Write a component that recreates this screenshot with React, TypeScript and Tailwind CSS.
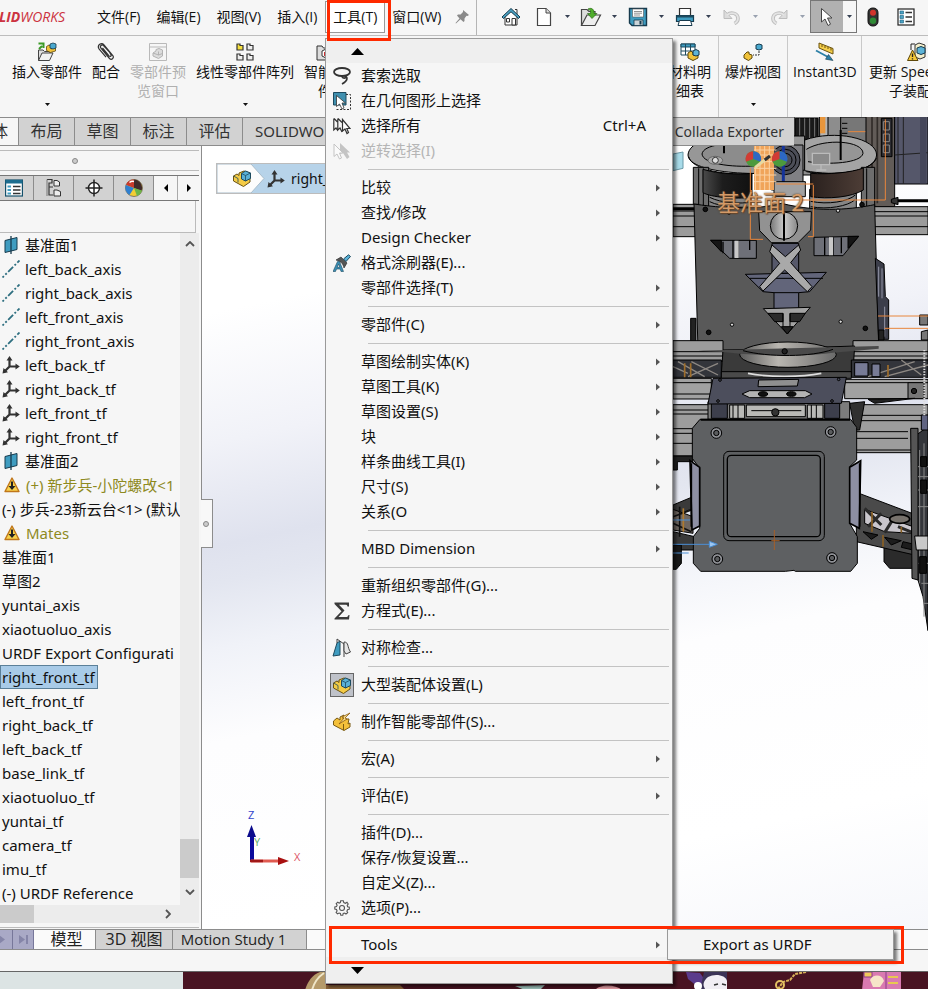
import React from "react";

type IconProps = { className?: string };

/* ---------- icons ---------- */

const Caret = ({ className = "" }: IconProps) => (
  <svg className={className} width="5" height="3" viewBox="0 0 5 3" aria-hidden="true">
    <path d="M0 0H5L2.5 3Z" fill="currentColor" />
  </svg>
);

const SubArrow = () => (
  <svg width="4" height="8" viewBox="0 0 4 8" aria-hidden="true">
    <path d="M0 0.5L4 4L0 7.5Z" fill="#555" />
  </svg>
);

const PinIcon = () => (
  <svg width="16" height="16" viewBox="0 0 16 16" aria-hidden="true">
    <path d="M9 1L15 6L13.500 7L12.500 6.800L10.500 9.500L10.500 12L9.500 13L6.500 10.200L2 14.500L1.500 14L5.500 9.500L3 6.500L4 5.500L6.500 5.500L9 3Z" fill="#8a8a8a" />
  </svg>
);

const HomeIcon = () => (
  <svg width="20" height="20" viewBox="0 0 20 20" aria-hidden="true">
    <path d="M4 9V18H16V9L10 4Z" fill="#fff" stroke="#333" />
    <path d="M14 2.500H16V7" fill="none" stroke="#333" />
    <path d="M1 10L10 1.500L19 10L17.500 11.500L10 4.800L2.500 11.500Z" fill="#4aa3c4" stroke="#173a4d" />
    <path d="M5.500 11.500H8.500V15H5.500ZM11 11.500H14.500V18H11Z" fill="#fff" stroke="#333" />
  </svg>
);

const NewDocIcon = () => (
  <svg width="16" height="20" viewBox="0 0 16 20" aria-hidden="true">
    <path d="M1.500 1.500H10L14.500 6V18.500H1.500Z" fill="#fff" stroke="#444" strokeWidth="1.200" />
    <path d="M10 1.500V6H14.500" fill="#ddd" stroke="#444" />
  </svg>
);

const OpenIcon = () => (
  <svg width="22" height="20" viewBox="0 0 22 20" aria-hidden="true">
    <path d="M1.500 18.500V2.500H7L9 4.500H15V8" fill="#ddd" stroke="#444" strokeWidth="1.200" />
    <path d="M1.500 18.500L7 8H20.500L15 18.500Z" fill="#eee" stroke="#444" strokeWidth="1.200" />
    <path d="M8 2C12 0 14.500 3 14 6.500H17L12 11.500L7.500 6.500H10.500C11 4 10 3 8 2Z" fill="#4fae2c" stroke="#2d6b18" strokeWidth="0.700" />
  </svg>
);

const SaveIcon = () => (
  <svg width="20" height="20" viewBox="0 0 20 20" aria-hidden="true">
    <path d="M1.500 1.500H18.500V18.500H4L1.500 16Z" fill="#3f9cc0" stroke="#173a4d" strokeWidth="1.400" />
    <path d="M4.500 2H15.500V10H4.500Z" fill="#fff" stroke="#555" strokeWidth="0.600" />
    <path d="M6 4.500H14M6 6.200H14M6 8H12" stroke="#777" strokeWidth="0.800" />
    <path d="M6 13H15V18.500H6Z" fill="#ccd4d8" stroke="#173a4d" strokeWidth="0.800" />
    <path d="M11.500 14H13.500V17.500H11.500Z" fill="#173a4d" />
  </svg>
);

const PrintIcon = () => (
  <svg width="20" height="20" viewBox="0 0 20 20" aria-hidden="true">
    <path d="M4.500 8V1.500H15.500V8" fill="#fff" stroke="#333" strokeWidth="1.200" />
    <path d="M1.500 8.500H18.500V14.500H1.500Z" fill="#3f9cc0" stroke="#173a4d" strokeWidth="1.200" />
    <path d="M1.500 8.500H18.500V10.500H1.500Z" fill="#1d4a5f" />
    <path d="M4.500 13.500H15.500L17 18.500H3Z" fill="#fff" stroke="#173a4d" />
  </svg>
);

const UndoIcon = ({ className = "" }: IconProps) => (
  <svg className={className} width="18" height="16" viewBox="0 0 18 16" aria-hidden="true">
    <path d="M4 6C8 2.500 15 4 15 9.500C15 12 13.500 13.500 11.500 14.500" fill="none" stroke="#bdbdbd" strokeWidth="3.600" />
    <path d="M1 1V9.500H9Z" fill="#dcdcdc" stroke="#bdbdbd" />
    <path d="M4 6C8 2.500 15 4 15 9.500C15 12 13.500 13.500 11.500 14.500" fill="none" stroke="#e4e4e4" strokeWidth="1.800" />
  </svg>
);

const PointerIcon = () => (
  <svg width="14" height="20" viewBox="0 0 14 20" aria-hidden="true">
    <path d="M1.500 1.500V15L5 12L8 18.500L10.500 17.200L7.500 11H12Z" fill="#fff" stroke="#444" />
  </svg>
);

const TrafficIcon = () => (
  <svg width="12" height="20" viewBox="0 0 12 20" aria-hidden="true">
    <rect x="1" y="1" width="10" height="18" rx="4.500" fill="#333" stroke="#111" />
    <circle cx="6" cy="5.800" r="3" fill="#d2352c" />
    <circle cx="6" cy="13.800" r="3.200" fill="#2f8a35" />
  </svg>
);

const ListIcon = ({ className = "" }: IconProps) => (
  <svg className={className} width="18" height="18" viewBox="0 0 18 18" aria-hidden="true">
    <rect x="1" y="1" width="16" height="16" fill="#fff" stroke="#222" strokeWidth="1.200" />
    <path d="M3 3H6.500V6H3ZM3 7.500H6.500V10.500H3ZM3 12H6.500V15H3Z" fill="#4aa3c4" stroke="#1b5f80" strokeWidth="0.600" />
    <path d="M8.500 4.500H15M8.500 9H15M8.500 13.500H15" stroke="#333" strokeWidth="1.300" />
  </svg>
);

const FeatureTreeIcon = () => (
  <svg width="18" height="18" viewBox="0 0 18 18" aria-hidden="true">
    <rect x="0.600" y="1" width="16.800" height="16" fill="#fff" stroke="#14506b" strokeWidth="1.200" />
    <path d="M0.600 1H17.400V4.500H0.600Z" fill="#1d6d8f" />
    <path d="M2.500 6.500H6V8.500H2.500ZM2.500 10H6V12H2.500ZM2.500 13.500H6V15.500H2.500Z" fill="#3f9cc0" />
    <path d="M8 7.500H15.500M8 11H15.500M8 14.500H15.500" stroke="#333" strokeWidth="1.300" />
  </svg>
);

const InsertPartIcon = () => (
  <svg width="20" height="20" viewBox="0 0 20 20" aria-hidden="true">
    <path d="M1.500 18.500V8H6L7.500 9.500H13V11" fill="#ddd" stroke="#444" />
    <path d="M1.500 18.500L5 11H16L12.500 18.500Z" fill="#f1f1f1" stroke="#444" />
    <path d="M2 7L5 4M1.500 1.500H6.500V6" stroke="#3a9a26" strokeWidth="2" fill="none" />
    <path d="M9.500 4.500L12 3L14 4.500V7L18.500 5V9L13.500 10.500L9.500 8.500Z" fill="#f0c23a" stroke="#5e480a" strokeWidth="0.800" />
    <path d="M13 2L16 1L19 2V6L16 7L13 6Z" fill="#4aa9cf" stroke="#173a4d" strokeWidth="0.800" />
  </svg>
);

const ClipIcon = () => (
  <svg width="18" height="20" viewBox="0 0 18 20" aria-hidden="true">
    <path d="M12.500 10L6.500 3.500C4.800 2 2.500 4 3.800 6L12.500 16.500C14.500 18.500 17.500 16 15.800 13.500L7 2.800C4.500 0 -0.300 3 2 6.800L9 15.200M5.500 6L12 13.800C13.200 15 14.800 14 13.800 12.500L12.500 10" fill="none" stroke="#333" strokeWidth="1.200" />
  </svg>
);

const PreviewIcon = () => (
  <svg width="18" height="18" viewBox="0 0 18 18" aria-hidden="true">
    <path d="M0.500 0.500H17.500V17.500H0.500ZM0.500 4H17.500" fill="none" stroke="#b9b9b9" />
    <path d="M4 10L7 8V6.500L10 5.500L13.500 7V13L9.500 15.500L4 13Z" fill="#dcdcdc" stroke="#b3b3b3" />
    <path d="M9.500 8.500V12L13.500 10.500M9.500 12L4 10" fill="none" stroke="#b3b3b3" />
  </svg>
);

const PatternIcon = () => (
  <svg width="18" height="18" viewBox="0 0 18 18" aria-hidden="true">
    <path d="M1 1H4V2.500H7V7H1Z" fill="#f5df3f" stroke="#333" strokeWidth="1.200" />
    <path d="M11 1H14V2.500H17V7H11ZM1 11H4V12.500H7V17H1ZM11 11H14V12.500H17V17H11Z" fill="#eee" stroke="#333" strokeWidth="1.200" />
  </svg>
);

const SmartIcon = () => (
  <svg width="18" height="18" viewBox="0 0 18 18" aria-hidden="true">
    <path d="M1 17V3H6L7.500 5H17V17Z" fill="#ddd" stroke="#333" />
    <path d="M6 8L10 6L14 8V13L10 15L6 13Z" fill="#fff" stroke="#333" />
    <path d="M8 9H12V13H8Z" fill="#c33" />
  </svg>
);

const BomIcon = () => (
  <svg width="20" height="18" viewBox="0 0 20 18" aria-hidden="true">
    <path d="M1 1H15V12H1Z" fill="#fff" stroke="#1d4a5f" />
    <path d="M1 1H15V4H1Z" fill="#3f9cc0" stroke="#1d4a5f" />
    <path d="M1 8H15M5.500 1V12M10.500 1V12" stroke="#1d4a5f" />
    <path d="M8 10L11 8L13 10V12L18 11V15L13 17.500L8 15Z" fill="#f0c23a" stroke="#5e480a" />
    <path d="M13 8L16 6.500L19 8V12L16 13L13 12Z" fill="#5db4d8" stroke="#173a4d" />
  </svg>
);

const ExplodeIcon = () => (
  <svg width="20" height="18" viewBox="0 0 20 18" aria-hidden="true">
    <path d="M1 12L4 9H6V11L9 12V15L5.500 17.500L1 15Z" fill="#f0c23a" stroke="#5e480a" />
    <path d="M13 2L16 1L19 2V6L16 7L13 6Z" fill="#4aa9cf" stroke="#173a4d" />
    <path d="M16 8V12H10" fill="none" stroke="#333" strokeDasharray="2 1" />
  </svg>
);

const InstantIcon = () => (
  <svg width="20" height="20" viewBox="0 0 20 20" aria-hidden="true">
    <path d="M4 1L18 6.500V12L4 6Z" fill="#f5cf4a" stroke="#6b5310" />
    <path d="M7 2.500V5M10 3.500V6M13 5V7M16 6V8.500" stroke="#6b5310" />
    <path d="M1 8.500L13 15" stroke="#2b7fa6" strokeWidth="1.800" />
    <path d="M18 18.500L10.500 17.200L13.500 12.500Z" fill="#2b7fa6" stroke="#173a4d" strokeWidth="0.600" />
  </svg>
);

const UpdateIcon = () => (
  <svg width="20" height="20" viewBox="0 0 20 20" aria-hidden="true">
    <path d="M4 8V2H8" fill="none" stroke="#222" />
    <path d="M8 3L12 1L18 3V15L13 17L8 15Z" fill="#f3eecb" stroke="#333" />
    <path d="M10 6L14 4.500L18 6V11L14 12.500L10 11Z" fill="#5db4d8" stroke="#173a4d" />
    <path d="M5.500 8L11 18.500H0.500Z" fill="#f6c937" stroke="#5e480a" />
    <path d="M5.500 11.500V15M5.500 16.200V17.500" stroke="#222" strokeWidth="1.400" />
  </svg>
);

const ConfigIcon = () => (
  <svg width="18" height="20" viewBox="0 0 18 20" aria-hidden="true">
    <path d="M2 1.500H7V5L4 5V17H8M4 9H8" fill="none" stroke="#333" strokeWidth="1.200" />
    <path d="M2 1.500V18" stroke="#777" />
    <path d="M9 2.500H12L14.500 4V8H9ZM9 12H12L15.500 13.500V18H9Z" fill="#eee" stroke="#333" />
  </svg>
);

const TargetIcon = () => (
  <svg width="18" height="18" viewBox="0 0 18 18" aria-hidden="true">
    <circle cx="9" cy="9" r="5.500" fill="#fff" stroke="#222" strokeWidth="1.400" />
    <path d="M9 0.500V17.500M0.500 9H17.500" stroke="#222" strokeWidth="1.500" />
  </svg>
);

const WheelIcon = () => (
  <svg width="18" height="18" viewBox="0 0 18 18" aria-hidden="true">
    <circle cx="9" cy="9" r="8.500" fill="#f2cd35" stroke="#444" strokeWidth="0.600" />
    <path d="M9 9L1 6A8.500 8.500 0 0 1 9 0.500Z" fill="#c93a2c" />
    <path d="M9 9V0.500A8.500 8.500 0 0 1 16.500 12Z" fill="#402a2a" />
    <path d="M9 9L4.500 16A8.500 8.500 0 0 1 0.800 6Z" fill="#2f7fd0" />
    <path d="M9 9L17 11.500A8.500 8.500 0 0 1 12 17Z" fill="#6bb54a" />
    <path d="M4.500 3.500A5 5 0 0 1 9 2.500" stroke="#fff" fill="none" strokeWidth="1.400" />
  </svg>
);

const PlaneIcon = () => (
  <svg width="14" height="18" viewBox="0 0 14 18" aria-hidden="true">
    <path d="M1 4.500L13 1.500V13.500L1 16.500Z" fill="#3f9cc0" stroke="#173a4d" />
    <path d="M7 0V18" stroke="#173a4d" strokeWidth="1.300" />
  </svg>
);

const AxisIcon = () => (
  <svg width="18" height="18" viewBox="0 0 18 18" aria-hidden="true">
    <path d="M0.500 17.500L17.500 0.500" stroke="#2e6f80" strokeWidth="1.800" strokeDasharray="7 2 2 2" strokeDashoffset="5" />
  </svg>
);

const FrameIcon = () => (
  <svg width="18" height="18" viewBox="0 0 18 18" aria-hidden="true">
    <path d="M7.500 2V10.500L2 16M7.500 10.500H16" fill="none" stroke="#333" strokeWidth="2.200" />
    <path d="M7.500 0L10.500 4.500H4.500ZM17.800 10.500L13.500 13.500V7.500ZM0.500 17.500L1.500 12L6 16.200Z" fill="#333" />
  </svg>
);

const WarnIcon = () => (
  <svg width="16" height="16" viewBox="0 0 16 16" aria-hidden="true">
    <path d="M8 1L15 14.500H1Z" fill="#f8d24c" stroke="#c0771b" strokeWidth="1.400" strokeLinejoin="round" />
    <path d="M8 4.500V10" stroke="#222" strokeWidth="2" />
    <path d="M4.500 9H11.500L8 13Z" fill="#222" />
  </svg>
);

const PartIcon = () => (
  <svg width="20" height="20" viewBox="0 0 20 20" aria-hidden="true">
    <path d="M1.500 8L5 6L7 7.500V5L12 3L18 5V14L11.500 18.500L1.500 13Z" fill="#f4cb45" stroke="#6b5310" strokeLinejoin="round" />
    <path d="M9.500 5.500L13.500 3L18.500 5V10.500L13.500 13L9.500 11Z" fill="#59b0d6" stroke="#1d4a5f" />
    <path d="M9.500 5.500L13.500 7.500L18.500 5M13.500 7.500V13M1.500 8L6 10.500V14.500" fill="none" stroke="#1d4a5f" strokeWidth="0.800" />
  </svg>
);

const LassoIcon = () => (
  <svg width="18" height="18" viewBox="0 0 18 18" aria-hidden="true">
    <ellipse cx="9" cy="5" rx="8" ry="4" fill="none" stroke="#333" strokeWidth="1.800" />
    <path d="M11 8.500C15.500 10 15 13.500 9 17M9.500 8.500C8 10.500 11 12 13 10.500" fill="none" stroke="#333" strokeWidth="1.600" />
  </svg>
);

const GeoSelectIcon = () => (
  <svg width="18" height="18" viewBox="0 0 18 18" aria-hidden="true">
    <path d="M0.500 0.500H13V13H0.500Z" fill="#3f8fae" stroke="#1d4a5f" />
    <path d="M13 2.500H17.500V17.500H3" fill="none" stroke="#333" strokeDasharray="2 1.500" />
    <path d="M3.500 3.500V14.500L6.500 12L9 17L11 16L9 11H12.500Z" fill="#fff" stroke="#333" strokeWidth="0.800" />
  </svg>
);

const MultiSelectIcon = () => (
  <svg width="18" height="18" viewBox="0 0 18 18" aria-hidden="true">
    <path d="M0.800 1.500V13L3 11L5 14M4.800 1.500V13L7 11L9 15M1 1.500L5 5.500M5 1.500L9 5.500" fill="none" stroke="#333" strokeWidth="1.200" />
    <path d="M9.500 2.500V14L12 12L14 16.500L15.500 15.500L13.800 11.500H17Z" fill="#fff" stroke="#333" strokeWidth="1.200" />
  </svg>
);

const InvertIcon = () => (
  <svg width="18" height="18" viewBox="0 0 18 18" aria-hidden="true">
    <path d="M7 1V12L10 11L14 17L16.500 15L14 10.500H17Z" fill="#c4c4c4" />
    <path d="M1 2V14.500L4 12L6.500 17L8.500 16L6.500 11H10Z" fill="#fafafa" stroke="#c4c4c4" />
  </svg>
);

const PainterIcon = () => (
  <svg width="18" height="18" viewBox="0 0 18 18" aria-hidden="true">
    <path d="M3 6L8 3L14 9L11 14C10 9 7 7 3 6Z" fill="#555" stroke="#222" strokeWidth="0.600" />
    <path d="M0 17.500L4.500 7.500H6.500L10.500 17.500H8L7.200 15H3.500L2.500 17.500ZM4.200 13.300H6.800L5.600 10Z" fill="#3b8fb5" stroke="#1d4a5f" strokeWidth="0.600" />
    <path d="M10.500 5L15.500 0.800L17.500 2.500L13 7.500Z" fill="#59b0d6" stroke="#1d4a5f" />
  </svg>
);

const SigmaIcon = () => (
  <svg width="16" height="18" viewBox="0 0 16 18" aria-hidden="true">
    <path d="M0.500 0.500H15V4.500H13.500C13.200 3 12.500 2.800 11.500 2.800H5L10.500 8.500L4.500 15H12C13.500 15 14 14.500 14.500 13H15.500L15 17.500H0.500V16.500L7.500 9.200L0.500 2Z" fill="#3a3a3a" />
  </svg>
);

const SymmetryIcon = () => (
  <svg width="20" height="20" viewBox="0 0 20 20" aria-hidden="true">
    <path d="M1 18L5 5L8 3V17Z" fill="#3f9cc0" stroke="#1d4a5f" />
    <path d="M5 1V5M5 1L12 6V19" fill="none" stroke="#444" />
    <path d="M12 4C17 4 15 9 18.500 14L14 16L12 13Z" fill="#e6e6e6" stroke="#444" />
  </svg>
);

const MakeSmartIcon = () => (
  <svg width="20" height="20" viewBox="0 0 20 20" aria-hidden="true">
    <path d="M1.500 9L5 6L8 8V5L12 3L11 7H17L16 12L18 11V15L12 18.500L1.500 13Z" fill="#f4c03a" stroke="#7a5b12" strokeLinejoin="round" />
    <path d="M18 1L10 5L12 6L7 12L15 7L13 6Z" fill="#fbe08a" stroke="#8a5b12" strokeWidth="0.800" />
    <path d="M11.500 12V18" stroke="#7a5b12" />
  </svg>
);

const GearIcon = () => (
  <svg width="16" height="16" viewBox="0 0 16 16" aria-hidden="true">
    <path d="M6.700 0.800H9.300L9.800 2.600L11.400 3.300L13 2.300L14.200 4L13.200 5.400L13.600 6.800L15.300 7.200V9.200L13.500 9.700L12.900 11.200L13.700 12.700L12 14L10.600 13L9.200 13.500L8.800 15.300H6.800L6.400 13.500L5 13L3.500 13.900L2.100 12.400L3.100 11L2.500 9.500L0.800 9V7L2.500 6.600L3.100 5.200L2.200 3.600L3.800 2.200L5.200 3.200L6.300 2.600Z" fill="none" stroke="#555" strokeWidth="1.100" />
    <circle cx="8" cy="8" r="2.500" fill="none" stroke="#555" strokeWidth="1.100" />
  </svg>
);

/* ---------- data ---------- */

type MenuEntry =
  | { kind: "item"; label: string; icon?: React.ReactNode; sub?: boolean; shortcut?: string; off?: boolean; on?: boolean }
  | { kind: "sep" };

const sep: MenuEntry = { kind: "sep" };
const item = (label: string, rest: object = {}): MenuEntry => ({ kind: "item", label, ...rest });

const menuEntries: MenuEntry[] = [
  item("套索选取", { icon: <LassoIcon /> }),
  item("在几何图形上选择", { icon: <GeoSelectIcon /> }),
  item("选择所有", { icon: <MultiSelectIcon />, shortcut: "Ctrl+A" }),
  item("逆转选择(I)", { icon: <InvertIcon />, off: true }),
  sep,
  item("比较", { sub: true }),
  item("查找/修改", { sub: true }),
  item("Design Checker", { sub: true }),
  item("格式涂刷器(E)...", { icon: <PainterIcon /> }),
  item("零部件选择(T)", { sub: true }),
  sep,
  item("零部件(C)", { sub: true }),
  sep,
  item("草图绘制实体(K)", { sub: true }),
  item("草图工具(K)", { sub: true }),
  item("草图设置(S)", { sub: true }),
  item("块", { sub: true }),
  item("样条曲线工具(I)", { sub: true }),
  item("尺寸(S)", { sub: true }),
  item("关系(O", { sub: true }),
  sep,
  item("MBD Dimension", { sub: true }),
  sep,
  item("重新组织零部件(G)..."),
  item("方程式(E)...", { icon: <SigmaIcon /> }),
  sep,
  item("对称检查...", { icon: <SymmetryIcon /> }),
  sep,
  item("大型装配体设置(L)", { icon: <PartIcon />, on: true }),
  sep,
  item("制作智能零部件(S)...", { icon: <MakeSmartIcon /> }),
  sep,
  item("宏(A)", { sub: true }),
  sep,
  item("评估(E)", { sub: true }),
  sep,
  item("插件(D)..."),
  item("保存/恢复设置..."),
  item("自定义(Z)..."),
  item("选项(P)...", { icon: <GearIcon /> }),
  sep,
  item("Tools", { sub: true }),
];

type TreeRow = { label: string; icon?: "plane" | "axis" | "frame" | "warn"; selected?: boolean };

const treeRows: TreeRow[] = [
  { label: "基准面1", icon: "plane" },
  { label: "left_back_axis", icon: "axis" },
  { label: "right_back_axis", icon: "axis" },
  { label: "left_front_axis", icon: "axis" },
  { label: "right_front_axis", icon: "axis" },
  { label: "left_back_tf", icon: "frame" },
  { label: "right_back_tf", icon: "frame" },
  { label: "left_front_tf", icon: "frame" },
  { label: "right_front_tf", icon: "frame" },
  { label: "基准面2", icon: "plane" },
  { label: "(+) 新步兵-小陀螺改<1", icon: "warn" },
  { label: "(-) 步兵-23新云台<1> (默认" },
  { label: "Mates", icon: "warn" },
  { label: "基准面1" },
  { label: "草图2" },
  { label: "yuntai_axis" },
  { label: "xiaotuoluo_axis" },
  { label: "URDF Export Configurati" },
  { label: "right_front_tf", selected: true },
  { label: "left_front_tf" },
  { label: "right_back_tf" },
  { label: "left_back_tf" },
  { label: "base_link_tf" },
  { label: "xiaotuoluo_tf" },
  { label: "yuntai_tf" },
  { label: "camera_tf" },
  { label: "imu_tf" },
  { label: "(-) URDF Reference" },
];

const treeIcons = { plane: <PlaneIcon />, axis: <AxisIcon />, frame: <FrameIcon />, warn: <WarnIcon /> };

/* ---------- top bars ---------- */

function SplitTool({ icon, name, off }: { icon: React.ReactNode; name: string; off?: boolean }) {
  return (
    <div className="flex h-full shrink-0 items-center">
      <button aria-label={name} className="flex w-6 items-center justify-center">{icon}</button>
      <button aria-label={`${name} ▾`} className={`flex w-[23px] items-center justify-center ${off ? "text-gray-400" : "text-gray-700"}`}>
        <Caret />
      </button>
    </div>
  );
}

function MenuBar() {
  return (
    <header className="flex h-9 shrink-0 items-center border-b border-[#bdbdbd] bg-[#f6f6f6] pb-[2px] font-['Open_Sans','Noto_Sans_CJK_SC',sans-serif]">
      <div className="-ml-px w-[98px] shrink-0 overflow-hidden text-sm italic leading-5 text-[#cc3340]">
        <span className="font-bold">LID</span>WORKS
      </div>
      <nav className="flex shrink-0 items-center gap-4 text-sm">
        {["文件(F)", "编辑(E)", "视图(V)", "插入(I)"].map((m) => (
          <button key={m} className="whitespace-nowrap">{m}</button>
        ))}
        <button className="-mx-2 h-8 whitespace-nowrap border border-[#999] bg-white px-[7px]">工具(T)</button>
        <button className="-ml-px whitespace-nowrap">窗口(W)</button>
      </nav>
      <div className="flex h-9 flex-1 items-center justify-end border-r border-[#b5b5b5] pr-[6px]"><PinIcon /></div>
      <div className="flex h-full w-[451px] shrink-0 items-center">
        <button aria-label="主页" className="ml-[22px] mr-[9px] flex w-6 shrink-0 items-center justify-center"><HomeIcon /></button>
        <SplitTool name="新建" icon={<NewDocIcon />} />
        <SplitTool name="打开" icon={<OpenIcon />} />
        <SplitTool name="保存" icon={<SaveIcon />} />
        <SplitTool name="打印" icon={<PrintIcon />} />
        <SplitTool name="撤消" icon={<UndoIcon />} off />
        <SplitTool name="重做" icon={<UndoIcon className="-scale-x-100" />} off />
        <div className="-ml-1 flex h-[33px] shrink-0 border border-[#777]">
          <button aria-label="选择" className="flex w-8 items-center justify-center bg-[#b1b1b1]"><PointerIcon /></button>
          <button aria-label="选择 ▾" className="flex w-[13px] items-center justify-center bg-[#f6f6f6] text-gray-700"><Caret /></button>
        </div>
        <button aria-label="重建" className="ml-[10px] shrink-0"><TrafficIcon /></button>
        <button aria-label="选项" className="ml-[18px] shrink-0"><ListIcon /></button>
      </div>
    </header>
  );
}

function RibbonButton({ icon, lines, arrow, off }: { icon: React.ReactNode; lines: string[]; arrow?: boolean; off?: boolean }) {
  return (
    <button className={`flex h-full shrink-0 flex-col items-center pt-[6px] text-sm leading-[19px] ${off ? "text-[#b0b0b0]" : "text-[#111]"}`}>
      <span className="flex h-5 items-center">{icon}</span>
      {lines.map((l) => (
        <span key={l} className="whitespace-nowrap">{l}</span>
      ))}
      {arrow && <Caret className="mt-[22px]" />}
    </button>
  );
}

function Ribbon() {
  return (
    <section className="flex h-[81px] shrink-0 bg-[#f6f6f6] font-['Open_Sans','Noto_Sans_CJK_SC',sans-serif]">
      <div className="flex flex-1 gap-[10px] overflow-hidden pl-3">
        <RibbonButton icon={<InsertPartIcon />} lines={["插入零部件"]} arrow />
        <RibbonButton icon={<ClipIcon />} lines={["配合"]} />
        <RibbonButton icon={<PreviewIcon />} lines={["零部件预", "览窗口"]} off />
        <RibbonButton icon={<PatternIcon />} lines={["线性零部件阵列"]} arrow />
        <RibbonButton icon={<SmartIcon />} lines={["智能扣", "件"]} />
      </div>
      <div className="flex w-[266px] shrink-0 overflow-hidden">
        <div className="shrink-0 border-r border-[#c9c9c9] px-[7px]"><RibbonButton icon={<BomIcon />} lines={["材料明", "细表"]} /></div>
        <div className="shrink-0 border-r border-[#c9c9c9] px-[6px]"><RibbonButton icon={<ExplodeIcon />} lines={["爆炸视图"]} arrow /></div>
        <div className="w-[74px] shrink-0 border-r border-[#c9c9c9] pl-[5px]"><RibbonButton icon={<InstantIcon />} lines={["Instant3D"]} /></div>
        <div className="shrink-0 px-[7px]"><RibbonButton icon={<UpdateIcon />} lines={["更新 Speedpak", "子装配体"]} /></div>
      </div>
    </section>
  );
}

function CommandTabs() {
  return (
    <nav className="relative z-10 flex h-[29px] w-[794px] shrink-0 border-y border-[#8c8c8c] bg-[#d2d2d2] text-base leading-[27px] text-[#333]">
      <button className="flex w-[19px] shrink-0 justify-end overflow-hidden border-r border-[#8c8c8c] bg-[#f6f6f6] pr-[10px]">体</button>
      {["布局", "草图", "标注", "评估"].map((t) => (
        <button key={t} className="w-14 shrink-0 border-r border-[#8c8c8c]">{t}</button>
      ))}
      <button className="flex-1 whitespace-nowrap border-r border-[#8c8c8c] px-3 text-left text-[15px]">SOLIDWORKS 插件</button>
      <button className="shrink-0 whitespace-nowrap px-[10px] text-sm">Collada Exporter</button>
    </nav>
  );
}

/* ---------- left panel ---------- */

function FeaturePanel() {
  const cell = "flex w-10 shrink-0 items-center justify-center border-r border-[#8c8c8c]";
  return (
    <aside className="w-[201px] shrink-0 bg-[#f6f6f6] pr-[2px]">
      <div className="h-1" />
      <div className="flex h-[21px] items-center justify-center border-y border-[#bbb] pr-[50px]">
        <span className="h-[6px] w-[6px] rounded-full border border-[#888] bg-[#ccc]" />
      </div>
      <div className="mt-1 flex h-[26px] border-y border-[#777] bg-[#d2d2d2]">
        <button aria-label="特征" className="flex w-[34px] shrink-0 items-center border-r border-[#8c8c8c] pl-[5px]"><FeatureTreeIcon /></button>
        <button aria-label="配置" className={cell}><ConfigIcon /></button>
        <button aria-label="尺寸" className={cell}><TargetIcon /></button>
        <button aria-label="外观" className={cell}><WheelIcon /></button>
        <button aria-label="上一个" className="flex w-6 items-center justify-center border-r border-[#aaa] bg-[#f6f6f6]">
          <svg width="4" height="8" viewBox="0 0 4 8"><path d="M4 0V8L0 4Z" /></svg>
        </button>
        <button aria-label="下一个" className="flex flex-1 items-center justify-center bg-[#f6f6f6]">
          <svg width="4" height="8" viewBox="0 0 4 8"><path d="M0 0V8L4 4Z" /></svg>
        </button>
      </div>
      <input aria-label="过滤" className="block h-8 w-[196px] border-b border-r border-[#bbb] bg-[#f6f6f6] outline-none" />
      <div className="flex">
        <ul className="w-[180px] overflow-hidden text-[15px] leading-6 text-[#111]">
          {treeRows.map((r, i) => (
            <li key={i} className="flex h-6 items-center whitespace-nowrap">
              {r.icon && <span className={`flex w-[22px] shrink-0 justify-center ${r.icon === "warn" ? "ml-px mr-[3px]" : "mr-[3px]"}`}>{treeIcons[r.icon]}</span>}
              <span
                className={
                  r.selected
                    ? "border border-[#5b8099] bg-[#a8cbe8] pl-px pr-[2px] leading-[22px]"
                    : r.icon === "warn"
                      ? "text-[#8e8a1e]"
                      : r.icon
                        ? ""
                        : "pl-[2px]"
                }
              >
                {r.label}
              </span>
            </li>
          ))}
        </ul>
        <div className="flex flex-1 flex-col items-center bg-[#ececec] text-[#555]">
          <svg className="mt-2" width="10" height="6" viewBox="0 0 10 6"><path d="M1 5L5 1L9 5" fill="none" stroke="currentColor" strokeWidth="1.800" /></svg>
          <div className="mt-auto h-[39px] w-full bg-[#cbcbcb]" />
          <svg className="mb-[10px] mt-[11px]" width="10" height="6" viewBox="0 0 10 6"><path d="M1 1L5 5L9 1" fill="none" stroke="currentColor" strokeWidth="1.800" /></svg>
        </div>
      </div>
      <div className="flex h-[18px] items-center justify-between bg-[#ececec] pr-[28px] text-[#555]">
        <div className="h-full w-[34px] bg-[#cbcbcb]" />
        <svg width="6" height="10" viewBox="0 0 6 10"><path d="M1 1L5 5L1 9" fill="none" stroke="currentColor" strokeWidth="1.800" /></svg>
      </div>
      <div className="mt-1 h-[2px] border-t border-[#bbb]" />
    </aside>
  );
}

/* ---------- 3D view ---------- */

const Screw = ({ x, y }: { x: number; y: number }) => (
  <g>
    <circle cx={x} cy={y} r="16" fill="#8f9196" stroke="#000" strokeWidth="3" />
    <circle cx={x} cy={y} r="8" fill="#5a5c5e" stroke="#000" strokeWidth="3" />
  </g>
);

function RobotModel() {
  return (
    <svg className="absolute left-[470px] top-[-29px]" width="256" height="523" viewBox="12 21 768 1569" fill="none" stroke="#000" strokeWidth="3" aria-hidden="true">
      <defs>
        <linearGradient id="drumL" x1="0" x2="1"><stop offset="0" stopColor="#4a4a4a" /><stop offset=".4" stopColor="#1d1d1d" /><stop offset="1" stopColor="#111" /></linearGradient>
        <linearGradient id="drumR" x1="0" x2="1"><stop offset="0" stopColor="#2a211e" /><stop offset="1" stopColor="#4d3d36" /></linearGradient>
        <linearGradient id="bowl" x1="0" x2="1"><stop offset="0" stopColor="#5b5b5b" /><stop offset=".4" stopColor="#b9b6b0" /><stop offset="1" stopColor="#6a6a6a" /></linearGradient>
        <linearGradient id="ball" x1="0" x2="1"><stop offset="0" stopColor="#777" /><stop offset=".5" stopColor="#ccc" /><stop offset="1" stopColor="#888" /></linearGradient>
      </defs>

      {/* rear frame */}
      <rect x="378" y="15" width="225" height="180" fill="#8d8d8d" />
      <path d="M382 25H450V108H382Z" fill="#1a1a1a" />
      <path d="M395 25V85M410 25V85M425 25V100M440 25V85" stroke="#777" />
      <path d="M455 15H480V105L455 100Z" fill="#b4b4b4" />
      <path d="M518 21H600V110H518Z" fill="#777" />
      <path d="M522 40H538M522 55H538M522 70H538M522 85H538" />
      <path d="M594 15H680V290H594Z" fill="#625c58" />
      <path d="M612 15V280M628 15V280" stroke="#312c29" strokeWidth="5" />
      <path d="M640 25H672V140H640Z" fill="#2b2b30" />
      <path d="M646 35H664V60H646ZM646 72H664V95H646ZM646 105H664V128H646Z" stroke="#888" />
      <path d="M680 15H780V222H680Z" fill="#55576a" />
      <path d="M690 15V222M706 15V222M680 135L780 128" stroke="#222" />
      <path d="M756 15H775V220H756Z" fill="#45475a" stroke="none" />

      {/* discs */}
      <path d="M60 135C62 100 120 76 220 78H410V180C300 200 64 195 60 135Z" fill="#979797" />
      <path d="M102 132C106 104 180 95 260 105V168C190 172 105 162 102 132Z" fill="#8c8c8c" />
      <path d="M410 90C500 58 625 84 626 135C622 188 500 200 410 182Z" fill="#a4a4a4" />
      <path d="M415 118C470 84 585 92 585 130C580 160 480 165 420 155" fill="#969696" />
      <path d="M168 98V130M518 60V150" strokeWidth="6" />
      <path d="M62 140C70 180 180 198 260 190M625 145C610 185 500 200 415 185" />
      <path d="M76 172H122V300H76ZM580 172H620V300H580Z" fill="#6d6d6d" />
      <path d="M92 175V290M106 175V290M596 175V290" />
      <path d="M122 238H250V310H122ZM425 238H565V310H425Z" fill="#858585" />
      <path d="M105 178C150 192 210 194 252 190V262C200 268 130 262 105 248Z" fill="url(#drumL)" />
      <path d="M428 190C480 194 550 188 586 174V240C550 262 480 268 428 260Z" fill="url(#drumR)" />
      <path d="M125 262C160 280 220 282 250 276M125 275C160 292 220 294 250 290M428 274C480 285 540 275 562 255M428 290C480 300 540 288 560 270" />

      {/* rails behind the plate */}
      <path d="M15 283H90V380H15ZM615 290H780V374H615Z" fill="#9b9b9b" />
      <path d="M15 303H90M15 318H90M15 350H90M615 305H780M615 318H780M615 350H780" />
      <path d="M15 296H100M670 272H780" strokeWidth="9" />
      <path d="M670 268L690 262V284L670 278Z" fill="#333" />

      {/* centre column */}
      <path d="M310 105H405V240H310Z" fill="#808084" />
      <circle cx="352" cy="150" r="44" fill="#4c4e58" />
      <circle cx="352" cy="150" r="32" />
      <circle cx="352" cy="150" r="20" />
      <path d="M346 105V220" stroke="#15339a" strokeWidth="9" />
      <path d="M318 215H412V260H318Z" fill="#a1a1a1" />

      {/* base plate */}
      <path d="M78 282C200 300 280 296 340 280C460 310 560 296 620 284L632 708L90 722Z" fill="#595959" />
      <path d="M128 391H265V445H185ZM438 382L572 379L525 437H438Z" fill="#6e7078" />
      <path d="M128 391H160V425ZM572 379H540V415Z" fill="#151515" />
      <path d="M165 395V430M195 391V445M210 391V445M245 391V420M470 382V436M495 382V436M520 382V430" strokeWidth="4" />
      <path d="M200 392H212V444H200ZM483 382H495V436H483Z" fill="#c8c8c8" stroke="none" />
      <path d="M312 400H392V490H312Z" fill="#56586a" />
      <path d="M232 493L475 487L425 545L392 548V596H318V548L285 545Z" fill="#62657a" />
      <path d="M245 505H465M318 548H392" />
      <path d="M312 405L352 440L392 405L398 420L368 458L432 530L418 545L350 480L285 543L275 530L335 460L305 425Z" fill="#a9a9a9" />
      <path d="M286 596L427 592L358 672Z" fill="#a3a3a3" />
      <path d="M300 610H345V635H320ZM366 610H412L395 635H366Z" fill="#2c2c2c" />
      <path d="M345 610V650M366 610V650" />
      <path d="M340 650H375L358 672Z" fill="#222" />
      <path d="M272 305H430L428 360L390 398H310L275 362Z" fill="#929292" />
      <circle cx="348" cy="347" r="41" fill="url(#ball)" />
      <path d="M348 310V392" strokeWidth="6" />
      {[[112, 298], [582, 284], [122, 667], [592, 655]].map(([x, y]) => (
        <circle key={`${x}-${y}`} cx={x} cy={y} r="7" fill="#111" />
      ))}
      {[[183, 308], [510, 302], [192, 644], [518, 635]].map(([x, y]) => (
        <circle key={`${x}-${y}`} cx={x} cy={y} r="5" fill="#ddd" />
      ))}

      {/* side parts */}
      <path d="M622 445L648 462L652 560L662 570V688H632Z" fill="#3c3e4a" />
      <path d="M632 470V560M642 475V565M650 590V680" stroke="#9496a8" />
      <path d="M68 625H84V705H68ZM632 660H648V690H632Z" fill="#222" />
      <path d="M755 615H780V645H755ZM760 665L780 660V690H760Z" fill="#777" />

      {/* lower rails */}
      <path d="M15 692H165V755H15ZM555 692H780V750H555Z" fill="#9c9c9c" />
      <path d="M15 725H165M15 738H165M555 725H780M555 738H780" />
      <path d="M165 722L560 708L555 785L160 790Z" fill="#3a3a3a" />
      <ellipse cx="360" cy="734" rx="145" ry="38" fill="url(#bowl)" />
      <path d="M90 722L632 708V716L495 728C440 738 280 740 165 726Z" fill="#4a4a4a" stroke="none" />
      <path d="M225 722C300 742 430 742 495 718" />
      <circle cx="350" cy="724" r="8" fill="#222" />

      {/* front chassis */}
      <g transform="translate(0 720)">
        <path d="M15 30H160V82H15ZM550 30H780V82H550Z" fill="#33353b" />
        <path d="M15 50L60 70M30 35L110 80M70 35L150 75M150 40L60 80M600 80L740 35M650 80L780 45M700 30L760 75" stroke="#8d8883" strokeWidth="4" />
        <path d="M50 40V82M68 40V82M660 45V80" stroke="#a06f2c" strokeWidth="5" />
        <path d="M560 38H600V78H560ZM612 42H636V80H612Z" fill="#777b96" />
        <path d="M15 85H130V147H15ZM530 88H780V146H530Z" fill="#a1a1a1" />
        <path d="M15 98H130M15 132H130M530 98H780" />
        <path d="M720 98H768V146H720Z" fill="#777" />
        <circle cx="738" cy="123" r="8" fill="#222" />
        <path d="M15 164H190V318H15ZM560 164H780V308H560Z" fill="#9d9d9d" />
        <path d="M15 180H190M15 192H190M15 236H90M15 250H90M15 280H90M560 196H780M560 212H780M560 245H720M560 265H720M560 300H730" />
        <path d="M600 148L740 145L620 160Z" fill="#222" />
        <path d="M545 160L590 155L575 240H560Z" fill="#303030" />

        <path d="M160 65H550V85H160Z" fill="#4a4a4a" />
        <path d="M240 70C300 82 400 82 460 70" stroke="#ddd" strokeWidth="5" />
        <path d="M120 155H545V208H120Z" fill="#7c7c7c" />
        <path d="M185 165H230V205H185ZM235 165H412V200H235ZM418 165H465V205H418Z" fill="#b9b9b6" />
        <path d="M195 165V205M210 165V205M250 182H400M430 165V205M445 165V205" />
        <circle cx="322" cy="187" r="11" fill="#333" />
        <path d="M130 160H178V205H130ZM470 160H515V205H470Z" fill="#3d3f4c" />
        <path d="M135 85L535 82L520 160L120 162Z" fill="#4c4e5c" />
        <path d="M272 90L392 88L388 108L270 110Z" fill="#8f8f8f" />
        <path d="M222 132L245 122H412L432 132L410 143H245Z" fill="#b3b3b3" />
        <ellipse cx="285" cy="132" rx="14" ry="7" fill="#111" />
        <ellipse cx="370" cy="132" rx="14" ry="7" fill="#111" />
        <circle cx="156" cy="90" r="4" /><circle cx="512" cy="88" r="4" /><circle cx="150" cy="153" r="4" /><circle cx="492" cy="153" r="4" />

        {/* suspension arms */}
        <path d="M15 465L75 440V475L15 500ZM15 545L80 560V600H15Z" fill="#3a3a3a" />
        <path d="M15 478L75 500V550L15 540Z" fill="#6e6660" />
        <path d="M15 500L70 480M15 520L70 545M35 470V560" stroke="#111" strokeWidth="5" />
        <path d="M46 475V545" stroke="#b07a2e" strokeWidth="5" />
        <path d="M15 585H40V640L25 658H15Z" fill="#1a1a1a" />
        <path d="M648 590H745V655H665L648 635Z" fill="#2b2b2b" />
        <path d="M560 425L745 495L780 510V545L740 540V615L565 575V510Z" fill="#4a4a4a" />
        <path d="M590 478L735 530V550L650 545L590 520Z" fill="#c9c6cc" />
        <path d="M590 475L640 525M640 490L600 530M680 500L650 548M690 530L740 550" stroke="#2a2a2a" strokeWidth="9" />
        <path d="M585 545L630 555L610 568ZM650 562L700 572L670 585ZM705 575L735 582V600L700 592Z" fill="#1c1c1c" />
        <ellipse cx="695" cy="507" rx="30" ry="13" fill="#77726c" strokeWidth="5" />
        <path d="M612 485V545M645 555V590M700 530V548" stroke="#8a6024" strokeWidth="5" />

        {/* right wheel side */}
        <path d="M745 255L780 230V842L765 740L750 690Z" fill="#34363b" />
        <path d="M728 235H750V690L732 685Z" fill="#555" />
        <path d="M755 300V700M768 280V800M750 350H780M750 380H780M750 420H780M750 470H780M752 640H780M760 700H780M765 760H780" stroke="#888" />
        <path d="M758 320H776V350H758ZM758 390H776V430H758ZM755 620H775V670H755Z" fill="#111" />
        <path d="M740 558H780V600H745Z" fill="#c9c9c9" />
        <path d="M760 195H780V240H760Z" fill="#606482" />
        <path d="M769 0V200" stroke="#ddd" strokeWidth="6" strokeDasharray="4 4" />
        <path d="M15 318H75V335H28V360H15Z" fill="#222" />

        {/* front cover */}
        <path d="M96 208H548L566 232V330L545 350V520L568 560V640L548 664H382L378 661L352 664H98L76 640V560L95 535V355L73 325V235Z" fill="#5e6062" />
        <path d="M66 332L95 352V528L72 540ZM578 332L545 352V520L574 535Z" fill="#8d8fa3" strokeWidth="5" />
        <path d="M70 340V530M575 340V530" strokeWidth="5" />
        <rect x="167" y="304" width="302" height="268" rx="16" strokeWidth="3" />
        <rect x="178" y="316" width="279" height="244" rx="12" strokeWidth="4" />
        <path d="M98 209H546" strokeWidth="6" />
        <Screw x={145} y={249} />
        <Screw x={488} y={246} />
        <Screw x={148} y={627} />
        <Screw x={492} y={624} />
        <path d="M319 540V600M310 572H335" stroke="#a5602a" />
        <path d="M15 510H66M15 583H124M15 609H62" stroke="#4a8fd6" />
        <path d="M124 574L148 583L124 592Z" stroke="#4a8fd6" fill="#9cc6f0" />
      </g>

      {/* highlighted plane */}
      <g stroke="#e8863c">
        <path d="M258 108H318V240H258Z" fill="#f0a45a" stroke="none" />
        <path d="M262 108V240M276 108V240M290 108V240M304 108V240M258 120H325M258 135H325M258 155H325M258 175H325M258 195H325M258 215H325" stroke="#fbd2a4" />
        <path d="M247 175V388H285M436 225V380H420M325 222H436M320 270H652V28M630 618H780M650 655H780M540 65H592M250 240V290" />
        <path d="M456 21H472V70H456Z" fill="#e8963c" stroke="none" />
      </g>

      {/* view toolbar glyphs */}
      <path d="M15 132L45 126V175L15 182Z" fill="#a8dbe9" stroke="#6b9aa8" />
      <ellipse cx="142" cy="151" rx="22" ry="12" fill="#aaa" stroke="#666" />
      <circle cx="142" cy="151" r="9" fill="#ddd" stroke="#333" />
      <g stroke="none">
        {[256, 335].map((x) => (
          <g key={x}>
            <circle cx={x} cy="147" r="23" fill="#4d9a3d" />
            <path d={`M${x} 147V124A23 23 0 0 0 ${x - 22} 155Z`} fill="#d23b34" />
            <path d={`M${x} 147V124A23 23 0 0 1 ${x + 22} 155Z`} fill="#2d68c4" />
          </g>
        ))}
      </g>
      <path d="M262 172L290 150" stroke="#e8d9a0" strokeWidth="9" />
      <path d="M290 150L306 138" stroke="#333" strokeWidth="9" />
      <path d="M433 130H485V164H433ZM459 164V178M445 180H475" stroke="#bbb" fill="#8a8a8a" strokeWidth="4" />
    </svg>
  );
}

function Triad() {
  return (
    <svg className="absolute left-[41px] top-[664px]" width="62" height="60" viewBox="0 0 62 60" aria-hidden="true">
      <path d="M9 51V26" stroke="#0b0b9c" strokeWidth="4" />
      <path d="M8.500 15L13 27H4Z" fill="#0b0b8c" />
      <path d="M8 51H36" stroke="#e05a50" strokeWidth="3" />
      <path d="M46 51L35 47V55Z" fill="#a81010" />
      <path d="M7 51H20" stroke="#a01818" strokeWidth="2.500" />
      <g fontSize="11" fontFamily="Open Sans, sans-serif">
        <text x="5" y="9" fill="#3344cc">Z</text>
        <text x="11" y="36" fill="#5fae6a">Y</text>
        <text x="51" y="51" fill="#dd5566">X</text>
      </g>
    </svg>
  );
}

function Viewport() {
  return (
    <section className="relative flex-1 border-l border-[#8c8c8c] bg-[linear-gradient(168deg,#fff_0%,#fff_18%,#f1f2f8_32%,#dfe2ee_43%,#e3e6f0_47%,#f0f2f8_54%,#fdfdfe_64%,#fff_85%,#f6f7fb_100%)]">
      <RobotModel />
      <span className="absolute left-[515px] top-[37px] z-10 whitespace-nowrap font-['Noto_Sans_CJK_SC',sans-serif] text-[23px] leading-9 text-[#d29a68] [text-shadow:0_0_2px_#5b3d22,1px_1px_1px_#6b4a2e]">基准面 2</span>
      <div className="absolute left-[14px] top-[17px] flex h-[31px] items-center border border-[#bcbcbc] bg-[#b7d3e9]">
        <svg width="48" height="29" viewBox="0 0 48 29" aria-hidden="true">
          <path d="M0 0H34L47 14.500L34 29H0Z" fill="#fcfcfc" stroke="#a9bdcb" />
          <g transform="translate(15 4)"><PartIcon /></g>
        </svg>
        <span className="ml-[2px] flex items-center gap-[6px] whitespace-nowrap pr-2 text-sm"><FrameIcon />right_front_tf</span>
      </div>
      <div className="absolute left-[-1px] top-[353px] flex h-[49px] w-3 items-center border border-l-0 border-[#8c8c8c] bg-[#f8f8f8] pl-[2px]">
        <span className="h-[6px] w-[6px] rounded-full border border-[#888] bg-[#ccc]" />
      </div>
      <Triad />
    </section>
  );
}

/* ---------- bottom ---------- */

function BottomTabs() {
  const nav = "flex w-[21px] shrink-0 items-center justify-center border-r border-[#77779a] bg-[#a9a9c6]";
  return (
    <div className="flex h-[21px] shrink-0 border-y border-[#8c8c8c] bg-[#fafafa] font-['Open_Sans','Noto_Sans_CJK_SC',sans-serif] text-base leading-[19px] text-[#222]">
      <button aria-label="下一页" className={`${nav} -ml-2`}><svg width="6" height="9" viewBox="0 0 6 9"><path d="M0 0L6 4.500L0 9Z" fill="#8585a8" /></svg></button>
      <button aria-label="末页" className={nav}><svg width="9" height="9" viewBox="0 0 9 9"><path d="M0 0L6 4.500L0 9ZM7 0H9V9H7Z" fill="#8585a8" /></svg></button>
      <button className="w-[62px] shrink-0 border-r border-[#8c8c8c] pl-1">模型</button>
      <button className="w-[77px] shrink-0 whitespace-nowrap border-r border-[#8c8c8c] bg-[#d2d2d2]">3D 视图</button>
      <button className="w-[134px] shrink-0 whitespace-nowrap border-r border-[#8c8c8c] bg-[#d2d2d2] pr-3 text-[15px]">Motion Study 1</button>
    </div>
  );
}

function Desktop() {
  return (
    <div className="flex min-h-[18px] flex-1 overflow-hidden border-t border-[#666] bg-[#491422]">
      <div className="w-[183px] shrink-0 bg-[#dce4e4]" />
      <svg className="h-[18px] w-[745px] shrink-0" viewBox="183 971 745 18" aria-hidden="true">
        <path d="M305 989C308 980 312 974 320 971H326V989Z" fill="#b59a6a" />
        <path d="M312 989C314 982 318 976 324 972" stroke="#efe6c8" strokeWidth="2" fill="none" />
        <path d="M326 989V984H400L405 989Z" fill="#8a6239" />
        <path d="M515 985L525 989H540L545 984Z" fill="#9fc3bd" />
        <path d="M595 989C600 983 615 983 622 989Z" fill="#e8a0a8" />
        <path d="M686 971L700 972L712 989H702L688 978Z" fill="#5b3c8c" />
        <path d="M704 971H727V989H700Z" fill="#3b3357" />
        <path d="M708 976C715 972 726 974 727 980V989H706C702 985 703 980 708 976Z" fill="#f1eef4" />
        <circle cx="698" cy="985" r="4" fill="#fff" />
        <path d="M714 984L718 983M722 983L726 984" stroke="#333" strokeWidth="1.500" />
        <path d="M806 971L795 973L790 979L783 981L778 988" stroke="#d9b45a" strokeWidth="2" strokeDasharray="3 1" fill="none" />
        <circle cx="780" cy="984" r="4" fill="none" stroke="#e3c163" strokeWidth="2" />
        <path d="M864 971H901V989H862Z" fill="#d97ab0" />
        <path d="M864 971H872V976H864ZM886 971V989" stroke="#8a3a8c" fill="#f0c95a" />
        <path d="M870 979C873 973 882 973 884 980L880 986H873Z" fill="#f6e5c8" />
        <path d="M888 976H898M888 982H898" stroke="#e8c850" strokeWidth="2" />
      </svg>
    </div>
  );
}

/* ---------- popup menu ---------- */

function ToolsMenu() {
  return (
    <div role="menu" className="absolute left-[325px] top-[38px] z-20 w-[348px] border border-[#9a9a9a] bg-[#f6f6f6] text-[15px] text-[#111] shadow-[3px_3px_3px_rgba(0,0,0,0.5)]">
      <button aria-label="向上滚动" className="flex h-6 w-full items-center bg-[#efefef] pl-[25px]">
        <svg width="13" height="7" viewBox="0 0 13 7"><path d="M0 7H13L6.500 0Z" /></svg>
      </button>
      {menuEntries.map((e, i) =>
        e.kind === "sep" ? (
          <div key={i} role="separator" className="flex h-3 items-center pl-[42px] pr-[3px]">
            <div className="h-px flex-1 bg-[#c3c3c3]" />
          </div>
        ) : (
          <button key={i} role="menuitem" className={`flex h-[25px] w-full items-center pl-1 pr-3 text-left leading-[25px] ${e.off ? "text-[#b5b5b5]" : ""}`}>
            <span className={`mr-[7px] flex h-6 w-6 shrink-0 items-center justify-center ${e.on ? "border border-[#666] bg-[#bfc2c9]" : ""}`}>{e.icon}</span>
            <span className="flex-1 whitespace-nowrap">{e.label}</span>
            {e.shortcut && <span className="mr-[14px]">{e.shortcut}</span>}
            {e.sub && <SubArrow />}
          </button>
        )
      )}
      <button aria-label="向下滚动" className="flex h-[26px] w-full items-center bg-[#efefef] pl-[25px]">
        <svg width="13" height="7" viewBox="0 0 13 7"><path d="M0 0H13L6.500 7Z" /></svg>
      </button>
    </div>
  );
}

export default function App() {
  return (
    <div className="relative flex min-h-screen flex-col overflow-hidden bg-[#f6f6f6] font-['Noto_Sans','Noto_Sans_CJK_SC',sans-serif] text-[#111]">
      <MenuBar />
      <Ribbon />
      <CommandTabs />
      <main className="flex shrink-0">
        <FeaturePanel />
        <Viewport />
      </main>
      <BottomTabs />
      <div className="h-[21px] shrink-0 bg-[#f6f6f6]" />
      <Desktop />

      <ToolsMenu />
      <div role="menu" className="absolute left-[667px] top-[929px] z-30 w-[227px] border border-[#9a9a9a] bg-[#f4f4f4] shadow-[3px_3px_3px_rgba(0,0,0,0.5)]">
        <button role="menuitem" className="block h-[29px] w-full pl-[35px] text-left text-[15px] leading-[29px]">Export as URDF</button>
      </div>

      {/* callout frames */}
      <div className="pointer-events-none absolute left-[327px] top-0 z-40 h-[41px] w-16 border-[3px] border-[#ff2a00]" />
      <div className="pointer-events-none absolute left-[329px] top-[926px] z-40 h-[38px] w-[575px] border-[3px] border-[#ff2a00]" />
    </div>
  );
}
